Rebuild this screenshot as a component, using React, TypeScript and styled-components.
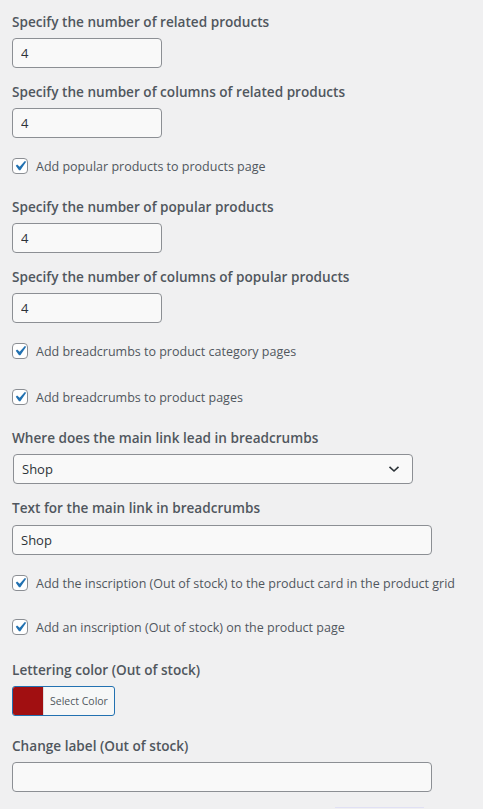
import styled, { createGlobalStyle } from 'styled-components';

const GlobalStyle = createGlobalStyle`
  html, body {
    margin: 0;
    padding: 0;
    background: #f0f0f1;
  }
  * {
    box-sizing: border-box;
  }
`;

const Page = styled.div`
  width: 483px;
  min-height: 809px;
  padding: 12px 0 0 12px;
  background: #f0f0f1;
  font-family: 'Open Sans', 'Noto Sans', sans-serif;
  color: #3c434a;
  overflow: hidden;
`;

const Field = styled.div<{ $gap?: number }>`
  display: flex;
  flex-direction: column;
  align-items: flex-start;
  gap: 6px;
  margin-top: ${(p) => p.$gap ?? 0}px;
`;

const Label = styled.label`
  font-size: 13.6px;
  font-weight: 600;
  line-height: 20px;
  color: #50575e;
`;

const TextInput = styled.input<{ $width: number }>`
  width: ${(p) => p.$width}px;
  height: 30px;
  padding: 0 8px;
  border: 1px solid #8c8f94;
  border-radius: 4px;
  background: #f9f9f9;
  font-family: inherit;
  font-size: 13px;
  color: #2c3338;
  outline: none;
`;

const SelectBox = styled.div`
  width: 400px;
  height: 30px;
  margin-left: 1px;
  padding: 0 12px 0 8px;
  display: flex;
  align-items: center;
  justify-content: space-between;
  border: 1px solid #8c8f94;
  border-radius: 4px;
  background: #f9f9f9;
  font-size: 13px;
  color: #2c3338;
`;

const CheckRow = styled.label<{ $gap: number }>`
  display: flex;
  align-items: center;
  gap: 8px;
  height: 20px;
  margin-top: ${(p) => p.$gap}px;
  font-size: 12.5px;
  color: #50575e;
`;

const CheckBox = styled.span`
  width: 16px;
  height: 16px;
  flex-shrink: 0;
  border: 1px solid #8c8f94;
  border-radius: 4px;
  background: #fff;
  display: flex;
  align-items: center;
  justify-content: center;
  overflow: visible;
`;

const ColorButton = styled.div`
  display: flex;
  align-items: stretch;
  width: 103px;
  height: 30px;
  border: 1px solid #2271b1;
  border-radius: 3px;
  background: #f6f7f7;
  overflow: hidden;
`;

const Swatch = styled.span<{ $color: string }>`
  width: 30px;
  background: ${(p) => p.$color};
`;

const SwatchText = styled.span`
  display: flex;
  align-items: center;
  padding-left: 6px;
  font-size: 10.5px;
  color: #50575e;
  border-left: 1px solid #dcdcde;
`;

const Footer = styled.div`
  margin-top: 15px;
  padding-left: 323px;
`;

const SaveButton = styled.div`
  width: 89px;
  height: 30px;
  border-top: 1px solid #e0e0f4;
`;

const Check = () => (
  <CheckBox>
    <svg width="20" height="20" viewBox="0 0 20 20" style={{ flexShrink: 0 }}>
      <path d="M14.83 4.89l1.34.94-5.81 8.38H9.02L5.78 9.67l1.34-1.25 2.57 2.4z" fill="#2271b1" />
    </svg>
  </CheckBox>
);

const Chevron = () => (
  <svg width="12" height="8" viewBox="0 0 12 8">
    <path d="M1.5 1.8l4.5 4.2 4.5-4.2" fill="none" stroke="#2c3338" strokeWidth="1.6" />
  </svg>
);

const App = () => {
  return (
    <Page>
      <GlobalStyle />
      <Field>
        <Label>Specify the number of related products</Label>
        <TextInput $width={150} defaultValue="4" />
      </Field>
      <Field $gap={14}>
        <Label>Specify the number of columns of related products</Label>
        <TextInput $width={150} defaultValue="4" />
      </Field>
      <CheckRow $gap={18}>
        <Check />
        Add popular products to products page
      </CheckRow>
      <Field $gap={21}>
        <Label>Specify the number of popular products</Label>
        <TextInput $width={150} defaultValue="4" />
      </Field>
      <Field $gap={14}>
        <Label>Specify the number of columns of popular products</Label>
        <TextInput $width={150} defaultValue="4" />
      </Field>
      <CheckRow $gap={18}>
        <Check />
        Add breadcrumbs to product category pages
      </CheckRow>
      <CheckRow $gap={26}>
        <Check />
        Add breadcrumbs to product pages
      </CheckRow>
      <Field $gap={21}>
        <Label>Where does the main link lead in breadcrumbs</Label>
        <SelectBox>
          Shop
          <Chevron />
        </SelectBox>
      </Field>
      <Field $gap={14}>
        <Label>Text for the main link in breadcrumbs</Label>
        <TextInput $width={420} defaultValue="Shop" style={{ marginTop: 1 }} />
      </Field>
      <CheckRow $gap={18}>
        <Check />
        Add the inscription (Out of stock) to the product card in the product grid
      </CheckRow>
      <CheckRow $gap={24}>
        <Check />
        Add an inscription (Out of stock) on the product page
      </CheckRow>
      <Field $gap={23}>
        <Label>Lettering color (Out of stock)</Label>
        <ColorButton>
          <Swatch $color="#a10f11" />
          <SwatchText>Select Color</SwatchText>
        </ColorButton>
      </Field>
      <Field $gap={20}>
        <Label>Change label (Out of stock)</Label>
        <TextInput $width={420} defaultValue="" />
      </Field>
      <Footer>
        <SaveButton />
      </Footer>
    </Page>
  );
};

export default App;
